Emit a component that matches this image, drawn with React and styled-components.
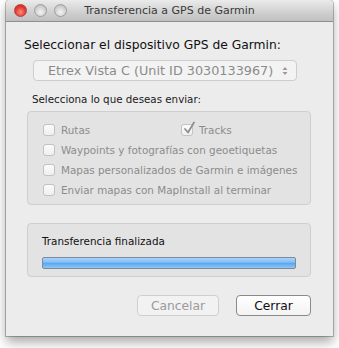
import React from 'react'
import styled, { createGlobalStyle } from 'styled-components'

const Global = createGlobalStyle`
  html, body {
    margin: 0;
    padding: 0;
    background: #ffffff;
  }
  body {
    font-family: 'DejaVu Sans', 'Liberation Sans', sans-serif;
  }
`

const Page = styled.div`
  width: 339px;
  height: 348px;
  padding-left: 6px;
  box-sizing: border-box;
`

const Window = styled.div`
  width: 327px;
  height: 336px;
  background: #ececec;
  border-radius: 4px 4px 0 0;
  box-shadow: 0 6px 12px rgba(0, 0, 0, 0.35), 0 0 0 1px rgba(0, 0, 0, 0.25);
  display: flex;
  flex-direction: column;
  overflow: hidden;
`

const TitleBar = styled.div`
  height: 21px;
  flex: none;
  display: flex;
  align-items: center;
  position: relative;
  background: linear-gradient(#ebebeb, #cfcfcf 60%, #c0c0c0);
  border-bottom: 1px solid #8f8f8f;
  padding-left: 8px;
`

const Lights = styled.div`
  display: flex;
  gap: 7px;
`

const Light = styled.span`
  width: 13px;
  height: 13px;
  border-radius: 50%;
  box-sizing: border-box;
  border: 1px solid ${p => (p.$red ? '#b0403c' : '#9d9d9d')};
  background: ${p =>
    p.$red
      ? 'radial-gradient(circle at 50% 65%, #ff8a80, #e43c33 55%, #b52a22)'
      : 'radial-gradient(circle at 50% 65%, #f4f4f4, #cfcfcf 60%, #b5b5b5)'};
`

const Title = styled.div`
  position: absolute;
  left: 0;
  right: 0;
  text-align: center;
  font-size: 11px;
  color: #3a3a3a;
  pointer-events: none;
`

const Body = styled.div`
  flex: 1;
  display: flex;
  flex-direction: column;
  padding: 16px 22px 0 21px;
`

const Heading = styled.div`
  font-size: 12.3px;
  color: #111;
  margin-left: -3px;
`

const Popup = styled.div`
  align-self: center;
  margin-top: 8px;
  margin-left: -8px;
  width: 264px;
  height: 21px;
  box-sizing: border-box;
  border: 1px solid #cdcdcd;
  border-radius: 4px;
  background: #f3f3f3;
  display: flex;
  align-items: center;
  padding: 0 8px 0 14px;
  font-size: 12.8px;
  color: #8b8b8b;
`

const PopupText = styled.span`
  flex: 1;
`

const SectionLabel = styled.div`
  margin-top: 12px;
  margin-left: 5px;
  font-size: 10.3px;
  color: #1a1a1a;
`

const Group = styled.div`
  margin-top: 6px;
  background: #e3e3e3;
  border: 1px solid #cfcfcf;
  border-radius: 4px;
  box-sizing: border-box;
  padding: 11px 0 0 15px;
  height: ${p => p.$h}px;
  display: flex;
  flex-direction: column;
`

const OptionGrid = styled.div`
  display: grid;
  grid-template-columns: 138px 1fr;
  row-gap: 7px;
`

const Option = styled.label`
  display: flex;
  align-items: center;
  gap: 6px;
  font-size: 10.4px;
  color: #8c8c8c;
  height: 13px;
  grid-column: ${p => (p.$wide ? '1 / span 2' : 'auto')};
  white-space: nowrap;
`

const Box = styled.span`
  width: 12px;
  height: 12px;
  flex: none;
  box-sizing: border-box;
  border: 1px solid #c2c2c2;
  border-radius: 3px;
  background: linear-gradient(#fbfbfb, #efefef);
  position: relative;
`

const Check = styled.svg`
  position: absolute;
  left: 0px;
  top: -4px;
`

const ProgressGroup = styled(Group)`
  margin-top: 18px;
  padding: 11px 14px 0 14px;
`

const ProgressLabel = styled.div`
  font-size: 10.4px;
  color: #111;
`

const Bar = styled.div`
  margin-top: 10px;
  height: 12px;
  box-sizing: border-box;
  border: 1px solid #7f8a98;
  border-radius: 2px;
  background: linear-gradient(#a9d4fb, #85c0f6 40%, #5ea8ee 55%, #8cc7fb);
`

const Buttons = styled.div`
  margin-top: 18px;
  display: flex;
  justify-content: flex-end;
  gap: 17px;
`

const Button = styled.div`
  height: 21px;
  width: ${p => p.$w}px;
  box-sizing: border-box;
  border: 1px solid ${p => (p.$disabled ? '#cfcfcf' : '#8a8a8a')};
  border-radius: 4px;
  background: ${p => (p.$disabled ? '#f2f2f2' : 'linear-gradient(#ffffff, #f3f3f3)')};
  display: flex;
  align-items: center;
  justify-content: center;
  font-size: 12.3px;
  color: ${p => (p.$disabled ? '#9a9a9a' : '#111')};
`

const Checkbox = ({ checked, wide, children }) => (
  <Option $wide={wide}>
    <Box>
      {checked && (
        <Check width="14" height="14" viewBox="0 0 14 14">
          <path d="M3 8 L6 11.5 L12 1.5" fill="none" stroke="#8e8e8e" strokeWidth="1.8" strokeLinecap="round" strokeLinejoin="round" />
        </Check>
      )}
    </Box>
    {children}
  </Option>
)

const App = () => {
  return (
    <Page>
      <Global />
      <Window>
        <TitleBar>
          <Lights>
            <Light $red />
            <Light />
            <Light />
          </Lights>
          <Title>Transferencia a GPS de Garmin</Title>
        </TitleBar>
        <Body>
          <Heading>Seleccionar el dispositivo GPS de Garmin:</Heading>
          <Popup>
            <PopupText>Etrex Vista C (Unit ID 3030133967)</PopupText>
            <svg width="6" height="10" viewBox="0 0 6 10">
              <path d="M0.5 4 L3 1 L5.5 4 Z M0.5 6 L3 9 L5.5 6 Z" fill="#9a9a9a" />
            </svg>
          </Popup>
          <SectionLabel>Selecciona lo que deseas enviar:</SectionLabel>
          <Group $h={94}>
            <OptionGrid>
              <Checkbox>Rutas</Checkbox>
              <Checkbox checked>Tracks</Checkbox>
              <Checkbox wide>Waypoints y fotografías con geoetiquetas</Checkbox>
              <Checkbox wide>Mapas personalizados de Garmin e imágenes</Checkbox>
              <Checkbox wide>Enviar mapas con MapInstall al terminar</Checkbox>
            </OptionGrid>
          </Group>
          <ProgressGroup $h={54}>
            <ProgressLabel>Transferencia finalizada</ProgressLabel>
            <Bar />
          </ProgressGroup>
          <Buttons>
            <Button $w={82} $disabled>Cancelar</Button>
            <Button $w={75}>Cerrar</Button>
          </Buttons>
        </Body>
      </Window>
    </Page>
  )
}

export default App
